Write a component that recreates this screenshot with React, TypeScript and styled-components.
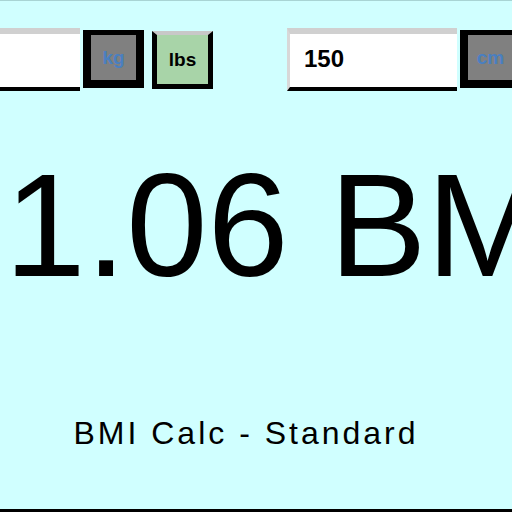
import styled, { createGlobalStyle } from "styled-components";

const Global = createGlobalStyle`
  html, body {
    margin: 0;
    padding: 0;
    background: #d0ffff;
  }
`;

const Page = styled.div`
  width: 512px;
  height: 512px;
  box-sizing: border-box;
  display: flex;
  flex-direction: column;
  overflow: hidden;
  background: #d0ffff;
  border-top: 1px solid #a8d4d4;
  border-bottom: 3px solid #000;
  font-family: "Liberation Sans", Arial, sans-serif;
`;

const Toolbar = styled.div`
  display: flex;
  align-items: flex-start;
  margin-top: 27px;
  margin-left: -90px;
  height: 64px;
`;

const Field = styled.div`
  width: 170px;
  height: 63px;
  box-sizing: border-box;
  background: #fff;
  border-top: 6px solid #d0d0d0;
  border-left: 3px solid #d8d8d8;
  border-bottom: 4px solid #000;
  display: flex;
  align-items: center;
  padding-left: 14px;
  padding-bottom: 3px;
  font-size: 24px;
  font-weight: bold;
  color: #000;
  flex-shrink: 0;
`;

const UnitButton = styled.div<{ $active?: boolean }>`
  width: 61px;
  height: 58px;
  box-sizing: border-box;
  margin-top: ${(p) => (p.$active ? "3px" : "2px")};
  margin-left: ${(p) => (p.$active ? "8px" : "3px")};
  background: ${(p) => (p.$active ? "#a8d4a8" : "#808080")};
  border: ${(p) => (p.$active ? "5px" : "8px")} solid #000;
  border-top: ${(p) => (p.$active ? "4px solid #c8c8c8" : "5px solid #000")};
  display: flex;
  align-items: center;
  justify-content: center;
  font-size: 19px;
  font-weight: bold;
  color: ${(p) => (p.$active ? "#000" : "#4a7fc0")};
  flex-shrink: 0;
`;

const Spacer = styled.div<{ $w: number }>`
  width: ${(p) => p.$w}px;
  flex-shrink: 0;
`;

const Value = styled.div`
  margin-top: 61px;
  height: 146px;
  display: flex;
  justify-content: center;
  white-space: nowrap;
  font-size: 146px;
  line-height: 1;
  color: #000;
`;

const Caption = styled.div`
  margin-top: 118px;
  text-align: center;
  font-size: 32px;
  line-height: 1;
  letter-spacing: 3px;
  color: #000;
  padding-right: 20px;
`;

export default function App() {
  return (
    <>
      <Global />
      <Page>
        <Toolbar>
          <Field />
          <UnitButton>kg</UnitButton>
          <UnitButton $active>lbs</UnitButton>
          <Spacer $w={74} />
          <Field>150</Field>
          <UnitButton>cm</UnitButton>
        </Toolbar>
        <Value>21.06 BMI</Value>
        <Caption>BMI Calc - Standard</Caption>
      </Page>
    </>
  );
}
